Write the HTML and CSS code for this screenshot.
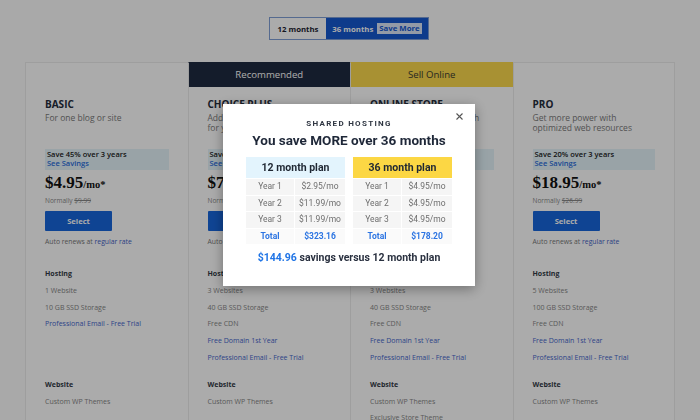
FILE: index.html
```html
<!DOCTYPE html>
<html lang="en">
<head>
    <meta charset="UTF-8">
    <meta name="viewport" content="width=device-width, initial-scale=1.0">
    <title>Shared Hosting Plans</title>
    <link rel="stylesheet" href="styles.css">
</head>
<body>
    <div class="page">
        <div class="term-wrap">
            <div class="term-toggle">
                <button class="term">12 months</button>
                <button class="term active">36 months <span class="save-more">Save More</span></button>
            </div>
        </div>

        <div class="plans">
            <div class="plan">
                <div class="plan-band"></div>
                <div class="plan-body">
                    <h3 class="plan-name">BASIC</h3>
                    <p class="plan-desc">For one blog or site</p>
                    <div class="savings">
                        <div>Save 45% over 3 years</div>
                        <a href="#">See Savings</a>
                    </div>
                    <div class="price">$4.95<span class="per">/mo*</span></div>
                    <div class="normally">Normally <s>$9.99</s></div>
                    <button class="select-btn">Select</button>
                    <div class="renews">Auto renews at <a href="#">regular rate</a></div>

                    <div class="features">
                        <div class="feature-title">Hosting</div>
                        <ul class="feature-list">
                            <li>1 Website</li>
                            <li>10 GB SSD Storage</li>
                            <li class="link">Professional Email - Free Trial</li>
                        </ul>
                        <div class="feature-title">Website</div>
                        <ul class="feature-list">
                            <li>Custom WP Themes</li>
                        </ul>
                    </div>
                </div>
            </div>

            <div class="plan plan-dark">
                <div class="plan-band">Recommended</div>
                <div class="plan-body">
                    <h3 class="plan-name">CHOICE PLUS</h3>
                    <p class="plan-desc">Additional privacy and features for your site</p>
                    <div class="savings">
                        <div>Save 40% over 3 years</div>
                        <a href="#">See Savings</a>
                    </div>
                    <div class="price">$7.45<span class="per">/mo*</span></div>
                    <div class="normally">Normally <s>$18.99</s></div>
                    <button class="select-btn">Select</button>
                    <div class="renews">Auto renews at <a href="#">regular rate</a></div>

                    <div class="features">
                        <div class="feature-title">Hosting</div>
                        <ul class="feature-list">
                            <li>3 Websites</li>
                            <li>40 GB SSD Storage</li>
                            <li>Free CDN</li>
                            <li class="link">Free Domain 1st Year</li>
                            <li class="link">Professional Email - Free Trial</li>
                        </ul>
                        <div class="feature-title">Website</div>
                        <ul class="feature-list">
                            <li>Custom WP Themes</li>
                        </ul>
                    </div>
                </div>
            </div>

            <div class="plan plan-gold">
                <div class="plan-band">Sell Online</div>
                <div class="plan-body">
                    <h3 class="plan-name">ONLINE STORE</h3>
                    <p class="plan-desc">Build your online store with ease</p>
                    <div class="savings">
                        <div>Save 35% over 3 years</div>
                        <a href="#">See Savings</a>
                    </div>
                    <div class="price">$9.95<span class="per">/mo*</span></div>
                    <div class="normally">Normally <s>$24.95</s></div>
                    <button class="select-btn">Select</button>
                    <div class="renews">Auto renews at <a href="#">regular rate</a></div>

                    <div class="features">
                        <div class="feature-title">Hosting</div>
                        <ul class="feature-list">
                            <li>3 Websites</li>
                            <li>40 GB SSD Storage</li>
                            <li>Free CDN</li>
                            <li class="link">Free Domain 1st Year</li>
                            <li class="link">Professional Email - Free Trial</li>
                        </ul>
                        <div class="feature-title">Website</div>
                        <ul class="feature-list">
                            <li>Custom WP Themes</li>
                            <li>Exclusive Store Theme</li>
                        </ul>
                    </div>
                </div>
            </div>

            <div class="plan">
                <div class="plan-band"></div>
                <div class="plan-body">
                    <h3 class="plan-name">PRO</h3>
                    <p class="plan-desc">Get more power with optimized web resources</p>
                    <div class="savings">
                        <div>Save 20% over 3 years</div>
                        <a href="#">See Savings</a>
                    </div>
                    <div class="price">$18.95<span class="per">/mo*</span></div>
                    <div class="normally">Normally <s>$26.99</s></div>
                    <button class="select-btn">Select</button>
                    <div class="renews">Auto renews at <a href="#">regular rate</a></div>

                    <div class="features">
                        <div class="feature-title">Hosting</div>
                        <ul class="feature-list">
                            <li>5 Websites</li>
                            <li>100 GB SSD Storage</li>
                            <li>Free CDN</li>
                            <li class="link">Free Domain 1st Year</li>
                            <li class="link">Professional Email - Free Trial</li>
                        </ul>
                        <div class="feature-title">Website</div>
                        <ul class="feature-list">
                            <li>Custom WP Themes</li>
                        </ul>
                    </div>
                </div>
            </div>
        </div>
    </div>

    <!-- Savings modal -->
    <div class="overlay">
        <div class="modal">
            <button class="modal-close" aria-label="Close">
                <svg width="7" height="7" viewBox="0 0 7 7"><path d="M0.5 0.5L6.5 6.5M6.5 0.5L0.5 6.5" stroke="#555" stroke-width="1.1" fill="none"/></svg>
            </button>
            <div class="modal-eyebrow">SHARED HOSTING</div>
            <h2 class="modal-title">You save MORE over 36 months</h2>

            <div class="compare">
                <div class="plan-table">
                    <div class="head head-12">12 month plan</div>
                    <div class="cell">Year 1</div><div class="cell">$2.95/mo</div>
                    <div class="cell">Year 2</div><div class="cell">$11.99/mo</div>
                    <div class="cell">Year 3</div><div class="cell">$11.99/mo</div>
                    <div class="cell total">Total</div><div class="cell total">$323.16</div>
                </div>
                <div class="plan-table">
                    <div class="head head-36">36 month plan</div>
                    <div class="cell">Year 1</div><div class="cell">$4.95/mo</div>
                    <div class="cell">Year 2</div><div class="cell">$4.95/mo</div>
                    <div class="cell">Year 3</div><div class="cell">$4.95/mo</div>
                    <div class="cell total">Total</div><div class="cell total">$178.20</div>
                </div>
            </div>

            <p class="modal-note"><span class="amount">$144.96</span> savings versus 12 month plan</p>
        </div>
    </div>
</body>
</html>
```

FILE: styles.css
```css
* {
    margin: 0;
    padding: 0;
    box-sizing: border-box;
}

body {
    font-family: "Open Sans", "Liberation Sans", sans-serif;
    background: #fcfcfc;
    color: #333;
    height: 420px;
    overflow: hidden;
}

a {
    color: #2a6ddb;
    text-decoration: none;
}

.page {
    width: 650px;
    margin: 0 auto;
    padding-top: 17px;
}

/* Term toggle */
.term-wrap {
    display: flex;
    justify-content: center;
    padding-right: 2px;
}

.term-toggle {
    display: flex;
    border: 1px solid #7f9fd6;
    height: 23px;
}

.term {
    border: none;
    font-family: inherit;
    font-size: 7.8px;
    font-weight: 700;
    background: #fff;
    color: #1d2433;
    width: 56px;
}

.term.active {
    width: 102px;
    background: #1558cf;
    color: #fff;
    display: flex;
    align-items: center;
    justify-content: center;
    gap: 4px;
}

.save-more {
    background: #dbe6f8;
    color: #1558cf;
    padding: 1px 2px;
    line-height: 9px;
}

/* Plans */
.plans {
    display: grid;
    grid-template-columns: repeat(4, 1fr);
    margin-top: 22px;
}

.plan {
    background: #fff;
    border-top: 1px solid #ececec;
    border-left: 1px solid #ececec;
    height: 358px;
    overflow: hidden;
}

.plan:last-child {
    border-right: 1px solid #ececec;
}

.plan-band {
    height: 24px;
    line-height: 24px;
    text-align: center;
    font-size: 9.6px;
}

.plan-dark {
    border-top-color: #1f2b40;
}

.plan-dark .plan-band {
    background: #1f2b40;
    color: #fff;
}

.plan-gold {
    border-top-color: #fbd84c;
}

.plan-gold .plan-band {
    background: #fbd84c;
    color: #3a3a32;
}

.plan-body {
    padding: 10px 19px 0;
}

.plan-name {
    font-size: 10px;
    font-weight: 700;
    line-height: 14px;
    color: #242c3b;
}

.plan-desc {
    margin-top: 1.5px;
    font-size: 8.5px;
    line-height: 10.4px;
    color: #7a7a7a;
    min-height: 21px;
}

.savings {
    margin-top: 15.5px;
    padding: 1px 2px 2px;
    background: #e4f4fa;
    font-size: 7.5px;
    font-weight: 600;
    line-height: 9px;
    color: #222;
}

.savings a {
    color: #2a6ddb;
}

.price {
    margin-top: 3px;
    font-family: "Liberation Serif", serif;
    font-weight: 700;
    font-size: 17px;
    line-height: 20px;
    color: #111;
}

.price .per {
    font-size: 10.5px;
}

.normally {
    margin-top: 2px;
    font-size: 6.5px;
    line-height: 8px;
    color: #888;
}

.select-btn {
    display: block;
    margin-top: 6px;
    width: 67px;
    height: 20px;
    border: none;
    border-radius: 1px;
    background: #1766dc;
    color: #fff;
    font-family: inherit;
    font-size: 7.6px;
    font-weight: 700;
}

.renews {
    margin-top: 6px;
    font-size: 6.8px;
    line-height: 10px;
    color: #777;
}

.renews a {
    color: #3f62c4;
}

.features {
    margin-top: 19.3px;
    font-size: 7px;
}

.feature-title {
    font-weight: 700;
    line-height: 16.7px;
    color: #333a46;
}

.feature-list {
    list-style: none;
    color: #868686;
    line-height: 16.7px;
    min-height: 93.8px;
}

.feature-list li.link {
    color: #4566cc;
}

/* Modal */
.overlay {
    position: fixed;
    inset: 0;
    background: rgba(0, 0, 0, 0.33);
    display: flex;
    justify-content: center;
    align-items: flex-start;
    padding-top: 104px;
    padding-right: 2px;
}

.modal {
    position: relative;
    width: 252px;
    padding: 15px 23px 21px;
    background: #fff;
    box-shadow: 0 3px 12px rgba(0, 0, 0, 0.35);
    font-family: Roboto, "Liberation Sans", sans-serif;
    text-align: center;
}

.modal-close {
    position: absolute;
    top: 9px;
    right: 12px;
    width: 7px;
    height: 7px;
    border: none;
    background: none;
    display: flex;
}

.modal-eyebrow {
    font-size: 8px;
    font-weight: 700;
    letter-spacing: 1.3px;
    line-height: 10px;
    color: #2f3642;
}

.modal-title {
    margin-top: 2px;
    font-size: 13.5px;
    font-weight: 700;
    line-height: 18px;
    color: #1e2738;
}

.compare {
    display: flex;
    gap: 8px;
    margin-top: 8px;
}

.plan-table {
    flex: 1;
    display: grid;
    grid-template-columns: 48px 1fr;
    gap: 1px;
}

.head {
    grid-column: 1 / -1;
    height: 21px;
    line-height: 21px;
    font-size: 10.5px;
    font-weight: 700;
    color: #1f2733;
}

.head-12 {
    background: #e3f4fd;
}

.head-36 {
    background: #fcd744;
}

.cell {
    height: 15.5px;
    line-height: 15.5px;
    background: #f5f5f5;
    font-size: 8.5px;
    color: #6f6f6f;
}

.cell.total {
    background: #fafafa;
    color: #2b74e2;
    font-weight: 700;
}

.modal-note {
    margin-top: 7px;
    font-size: 10.5px;
    font-weight: 700;
    line-height: 14px;
    color: #2a3140;
}

.modal-note .amount {
    color: #1f74e6;
}
```
